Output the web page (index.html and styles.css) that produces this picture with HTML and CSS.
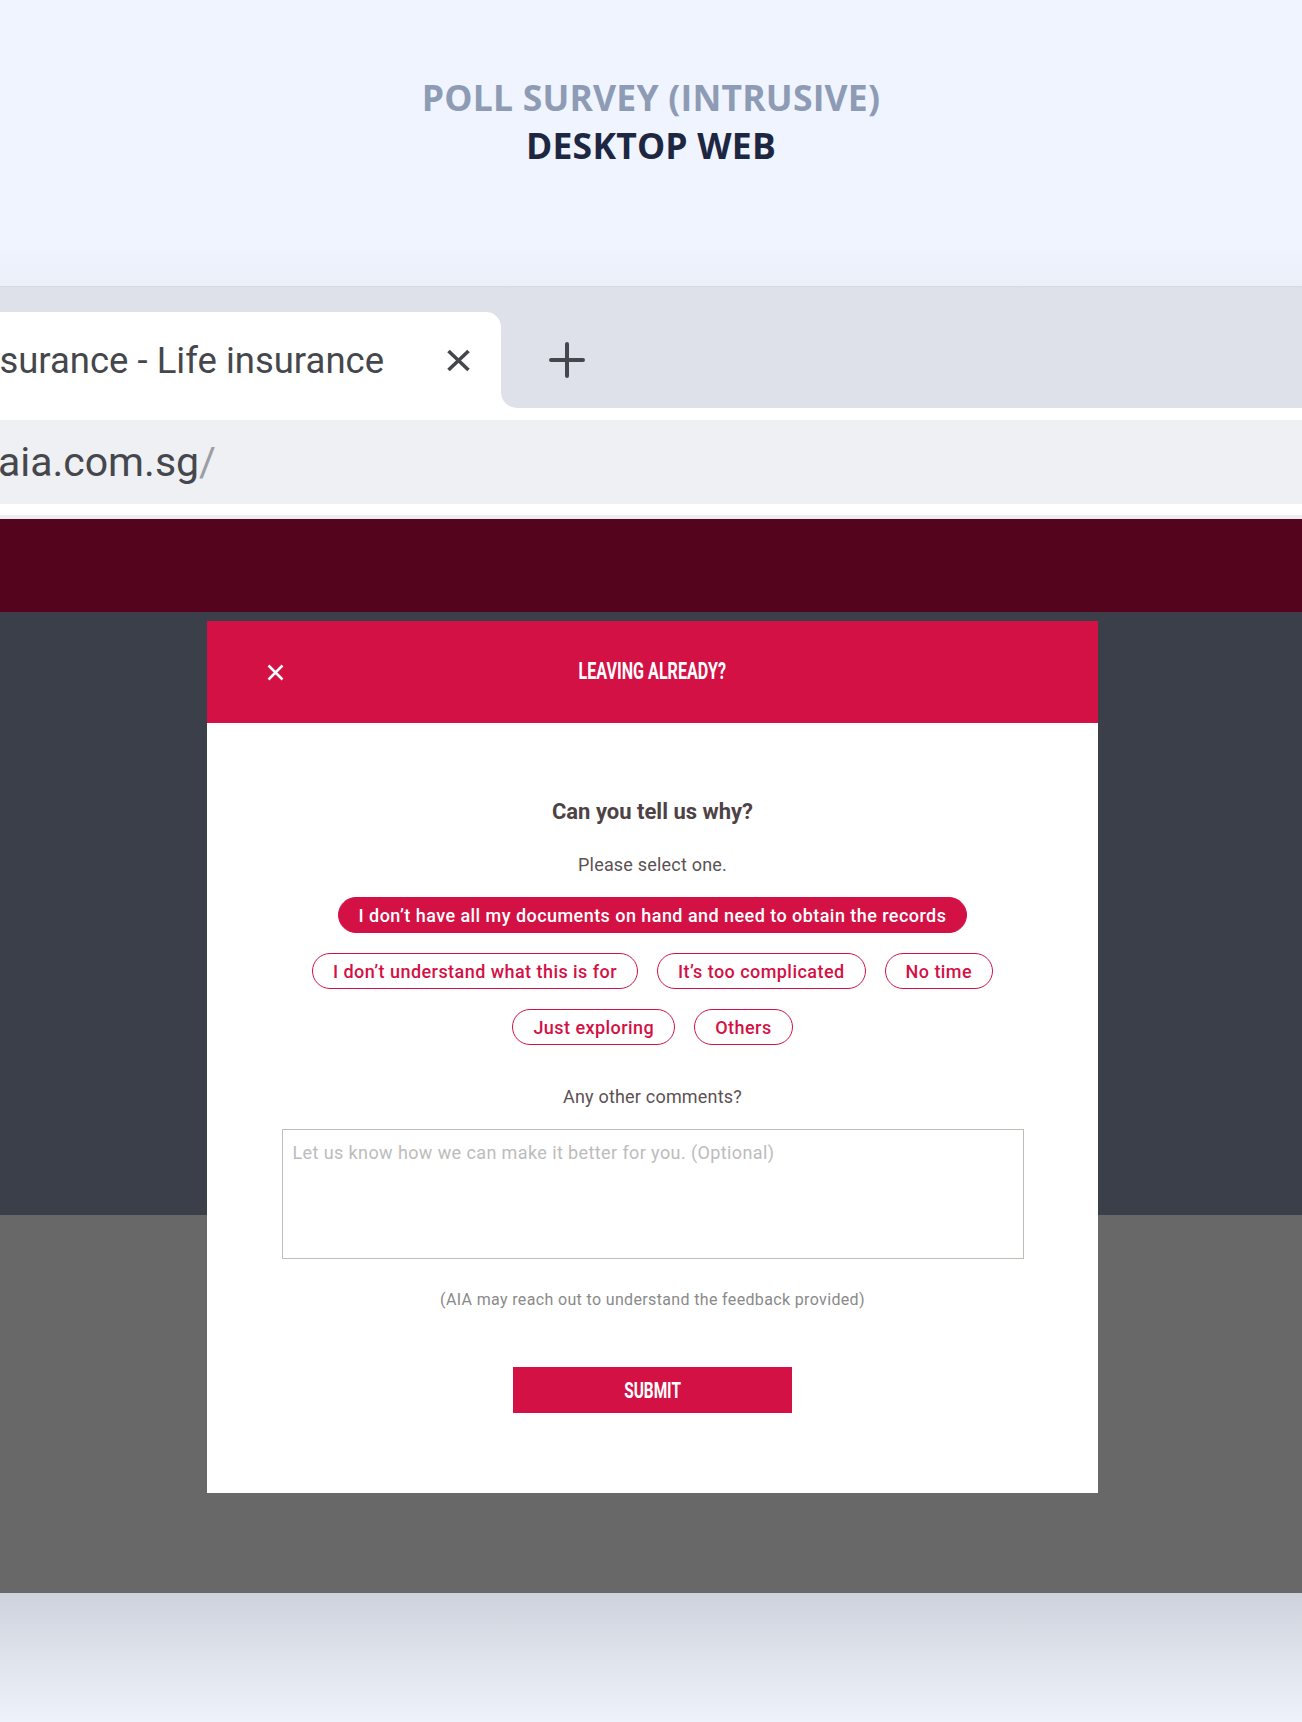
FILE: index.html
```html
<!DOCTYPE html>
<html lang="en">
<head>
<meta charset="utf-8">
<title>Poll Survey (Intrusive) - Desktop Web</title>
<link rel="stylesheet" href="styles.css">
</head>
<body>
<div class="page">
  <header class="hero">
    <div class="hero-sub">POLL SURVEY (INTRUSIVE)</div>
    <div class="hero-title">DESKTOP WEB</div>
  </header>

  <div class="browser">
    <div class="tabstrip">
      <div class="tab-col">
        <div class="tab">
          <span class="tab-title">surance - Life insurance</span>
          <svg class="tab-close" viewBox="0 0 25 23" aria-hidden="true">
            <path d="M2.5 2 L22.5 21 M22.5 2 L2.5 21" stroke="#45474c" stroke-width="3.6" fill="none"/>
          </svg>
        </div>
      </div>
      <div class="tab-rest">
        <svg class="tab-new" viewBox="0 0 36 36" aria-hidden="true">
          <path d="M18 2 V34 M2 18 H34" stroke="#45474c" stroke-width="4" stroke-linecap="round" fill="none"/>
        </svg>
      </div>
    </div>

    <div class="toolbar">
      <div class="omnibox">
        <div class="url"><span>aia.com.sg</span><span class="slash">/</span></div>
      </div>
    </div>
    <div class="toolbar-line"></div>

    <div class="site">
      <div class="site-nav"></div>
      <div class="site-body"></div>
      <div class="site-foot"></div>

      <div class="modal" role="dialog" aria-labelledby="modal-title">
        <div class="modal-head">
          <div class="modal-close-cell">
            <svg class="modal-close" viewBox="0 0 17 17" aria-label="Close">
              <path d="M1.5 1.5 L15.5 15.5 M15.5 1.5 L1.5 15.5" stroke="#ffffff" stroke-width="2.5" fill="none"/>
            </svg>
          </div>
          <div class="modal-title" id="modal-title"><span>LEAVING ALREADY?</span></div>
          <div></div>
        </div>
        <div class="modal-body">
          <div class="question">Can you tell us why?</div>
          <div class="hint">Please select one.</div>
          <div class="chips">
            <div class="chip-row">
              <span class="chip chip-on">I don’t have all my documents on hand and need to obtain the records</span>
            </div>
            <div class="chip-row">
              <span class="chip">I don’t understand what this is for</span>
              <span class="chip">It’s too complicated</span>
              <span class="chip">No time</span>
            </div>
            <div class="chip-row">
              <span class="chip">Just exploring</span>
              <span class="chip">Others</span>
            </div>
          </div>
          <div class="comments-label">Any other comments?</div>
          <textarea class="comments" placeholder="Let us know how we can make it better for you. (Optional)"></textarea>
          <div class="note">(AIA may reach out to understand the feedback provided)</div>
          <div class="submit"><span>SUBMIT</span></div>
        </div>
      </div>
    </div>
  </div>

  <div class="bottom-fade"></div>
</div>
</body>
</html>
```

FILE: styles.css
```css
* { box-sizing: border-box; }

html, body {
  margin: 0;
  padding: 0;
}

body {
  width: 1302px;
  height: 1722px;
  overflow: hidden;
  background: #eef2fb;
  font-family: Roboto, "Liberation Sans", Arial, sans-serif;
}

/* ---------- hero ---------- */
.hero {
  height: 287px;
  padding-top: 73px;
  text-align: center;
  font-family: "Open Sans", "Noto Sans", sans-serif;
  font-weight: 700;
  font-size: 35.5px;
  line-height: 48px;
  background: linear-gradient(#eff4fe 0, #eff4fe 245px, #ebeff8 286px);
  border-bottom: 1px solid #d5d9e2;
}

.hero-sub { color: #8e9bb5; letter-spacing: 0.2px; }
.hero-title { color: #1e2742; letter-spacing: 0.2px; }

/* ---------- browser chrome ---------- */
.tabstrip {
  display: flex;
  height: 121px;
  background: #ffffff;
}

.tab-col {
  width: 501px;
  flex: none;
  background: #dee1e9;
  padding-top: 25px;
  display: flex;
}

.tab {
  flex: 1;
  background: #ffffff;
  border-top-right-radius: 15px;
  display: flex;
  align-items: center;
  justify-content: flex-end;
  overflow: hidden;
  padding-right: 30px;
}

.tab-title {
  flex: none;
  white-space: nowrap;
  font-size: 36.5px;
  color: #45474c;
  margin-right: 62px;
}

.tab-close {
  flex: none;
  width: 25px;
  height: 23px;
}

.tab-rest {
  flex: 1;
  background: #dee1e9;
  border-bottom-left-radius: 16px;
  display: flex;
  align-items: center;
  padding-left: 48px;
  padding-top: 25px;
}

.tab-new {
  width: 36px;
  height: 36px;
}

.toolbar {
  background: #ffffff;
  padding: 12px 0 11px;
}

.omnibox {
  height: 84px;
  background: #eef0f4;
  display: flex;
  align-items: center;
}

.url {
  width: 216px;
  display: flex;
  justify-content: flex-end;
  white-space: nowrap;
  font-size: 41px;
  color: #45474c;
}

.url span { flex: none; }
.url .slash { color: #9b9da2; }

.toolbar-line {
  height: 4px;
  background: #eceef2;
}

/* ---------- site behind overlay ---------- */
.site { position: relative; }

.site-nav { height: 93px; background: #54051d; }
.site-body { height: 603px; background: #3a3f4a; }
.site-foot { height: 378px; background: #686868; }

/* ---------- modal ---------- */
.modal {
  position: absolute;
  top: 102px;
  left: 207px;
  width: 891px;
  background: #ffffff;
}

.modal-head {
  height: 102px;
  background: #d31145;
  display: grid;
  grid-template-columns: 1fr auto 1fr;
  align-items: center;
}

.modal-close-cell {
  padding-left: 60px;
  display: flex;
  align-items: center;
}

.modal-close {
  width: 17px;
  height: 17px;
}

.modal-title {
  color: #ffffff;
  font-weight: 700;
  font-size: 23px;
  line-height: 26px;
  display: flex;
  justify-content: center;
  white-space: nowrap;
}

.modal-title span,
.submit span {
  display: inline-block;
  transform: scaleX(0.7);
  transform-origin: center;
}

.modal-body {
  padding: 76px 0 80px;
  text-align: center;
}

.question {
  font-size: 22px;
  line-height: 26px;
  font-weight: 700;
  color: #4e4245;
}

.hint {
  margin-top: 29px;
  font-size: 18px;
  line-height: 22px;
  letter-spacing: 0.2px;
  color: #5b5153;
}

.chips {
  margin-top: 21px;
  display: flex;
  flex-direction: column;
  gap: 20px;
}

.chip-row {
  display: flex;
  justify-content: center;
  gap: 19px;
}

.chip {
  height: 36px;
  padding: 0 20px;
  border-radius: 18px;
  border: 1.5px solid #d31145;
  color: #d31145;
  font-size: 18px;
  font-weight: 500;
  letter-spacing: 0.45px;
  display: inline-flex;
  align-items: center;
  white-space: nowrap;
}

.chip-on {
  background: #d31145;
  color: #ffffff;
}

.comments-label {
  margin-top: 41px;
  font-size: 18px;
  line-height: 22px;
  letter-spacing: 0.2px;
  color: #5b5153;
}

.comments {
  display: block;
  margin: 21px auto 0;
  width: 742px;
  height: 130px;
  border: 1.5px solid #bdbdb5;
  border-radius: 0;
  padding: 12px 10px;
  font-family: Roboto, "Liberation Sans", sans-serif;
  font-size: 18px;
  line-height: 22px;
  letter-spacing: 0.4px;
  resize: none;
  outline: none;
}

.comments::placeholder { color: #bcbcbc; }

.note {
  margin-top: 31px;
  font-size: 16px;
  line-height: 20px;
  letter-spacing: 0.35px;
  color: #8a8a8a;
}

.submit {
  margin: 57px auto 0;
  width: 279px;
  height: 46px;
  background: #d31145;
  color: #ffffff;
  font-weight: 700;
  font-size: 22px;
  display: flex;
  align-items: center;
  justify-content: center;
}

/* ---------- bottom ---------- */
.bottom-fade {
  height: 129px;
  background: linear-gradient(#cdd2dc 0, #dde1ea 45%, #eef2fb 100%);
}
```
